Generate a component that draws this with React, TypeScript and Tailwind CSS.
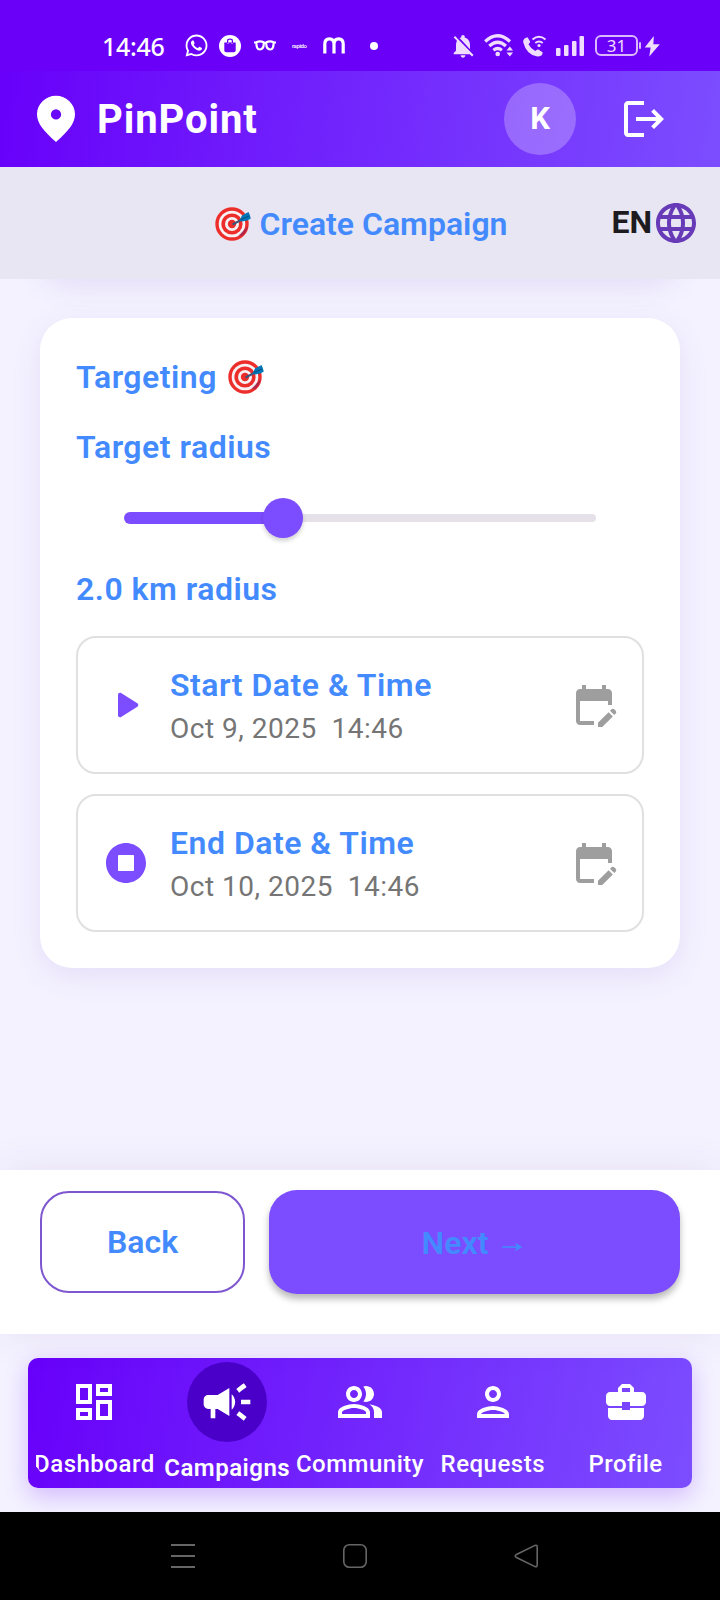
import type { ReactNode } from "react";
import { FaWhatsapp } from "react-icons/fa";
import { MdLanguage } from "react-icons/md";

function Icon({ d, className }: { d: string; className: string }) {
  return (
    <svg viewBox="0 0 24 24" fill="currentColor" className={className}>
      <path d={d} />
    </svg>
  );
}

const PATHS = {
  logout: "M17 7l-1.41 1.41L18.17 11H8v2h10.17l-2.58 2.58L17 17l5-5zM4 5h8V3H4c-1.1 0-2 .9-2 2v14c0 1.1.9 2 2 2h8v-2H4V5z",
  play: "M8 6.82v10.36c0 .79.87 1.27 1.54.84l8.14-5.18c.62-.39.62-1.29 0-1.69L9.54 5.98C8.87 5.55 8 6.03 8 6.82z",
  stop: "M12 2C6.48 2 2 6.48 2 12s4.48 10 10 10 10-4.48 10-10S17.52 2 12 2zm3.600 14H8.400a.4.4 0 0 1-.4-.4V8.400c0-.22.18-.4.4-.4h7.200c.22 0 .4.18.4.4v7.200a.4.4 0 0 1-.4.4z",
  calendar:
    "M12 22H5c-1.11 0-2-.9-2-2l.01-14c0-1.1.88-2 1.99-2h1V2h2v2h8V2h2v2h1c1.1 0 2 .9 2 2v6h-2v-2H5v10h7v2zm10.13-5.01.71-.71c.39-.39.39-1.02 0-1.41l-.71-.71c-.39-.39-1.02-.39-1.41 0l-.71.71 2.12 2.12zm-.71.71-5.300 5.300H14v-2.120l5.300-5.300 2.120 2.120z",
  dashboard: "M19 5v2h-4V5h4M9 5v6H5V5h4m10 8v6h-4v-6h4M9 17v2H5v-2h4M21 3h-8v6h8V3zM11 3H3v10h8V3zm10 8h-8v10h8V11zm-10 4H3v6h8v-6z",
  campaign:
    "M18 11v2h4v-2h-4zM16 17.610c.96.71 2.21 1.65 3.200 2.390.4-.53.8-1.070 1.200-1.600-.99-.74-2.240-1.680-3.200-2.400-.4.54-.8 1.080-1.200 1.610zM20.400 5.600C20 5.070 19.600 4.530 19.200 4c-.99.74-2.240 1.680-3.200 2.400.4.53.8 1.070 1.200 1.600.96-.72 2.210-1.650 3.200-2.400zM4 9c-1.100 0-2 .9-2 2v2c0 1.100.9 2 2 2h1v4h2v-4h1l5 3V6L8 9H4zm11.500 3c0-1.330-.58-2.530-1.500-3.350v6.690c.92-.81 1.500-2.010 1.500-3.340z",
  people:
    "M16.670 13.130C18.040 14.060 19 15.320 19 17v3h4v-3c0-2.180-3.570-3.470-6.330-3.870zM15 12c2.210 0 4-1.790 4-4s-1.790-4-4-4c-.47 0-.91.1-1.330.24C14.500 5.270 15 6.580 15 8s-.5 2.730-1.330 3.760c.42.14.86.24 1.330.24zM9 12c2.210 0 4-1.790 4-4s-1.790-4-4-4-4 1.790-4 4 1.790 4 4 4zm0-6c1.100 0 2 .9 2 2s-.9 2-2 2-2-.9-2-2 .9-2 2-2zM9 13c-2.670 0-8 1.340-8 4v3h16v-3c0-2.660-5.330-4-8-4zm6 5H3v-.99C3.200 16.290 6.300 15 9 15s5.800 1.290 6 2v1z",
  person:
    "M12 6c1.100 0 2 .9 2 2s-.9 2-2 2-2-.9-2-2 .9-2 2-2m0 10c2.700 0 5.800 1.290 6 2H6c.23-.72 3.310-2 6-2m0-12C9.790 4 8 5.790 8 8s1.790 4 4 4 4-1.790 4-4-1.790-4-4-4zm0 10c-2.670 0-8 1.340-8 4v2h16v-2c0-2.660-5.330-4-8-4z",
  briefcase:
    "M10 16v-1H3.010L3 19c0 1.110.89 2 2 2h14c1.110 0 2-.89 2-2v-4h-7v1h-4zm10-9h-4.010V5l-2-2h-4l-2 2v2H4c-1.100 0-2 .9-2 2v3c0 1.110.89 2 2 2h6v-2h4v2h6c1.100 0 2-.9 2-2V9c0-1.100-.9-2-2-2zm-6 0h-4V5h4v2z",
  bellOff:
    "M20 18.690L7.840 6.140 5.270 3.490 4 4.760l2.800 2.800v.010c-.52.99-.8 2.160-.8 3.420v5l-2 2v1h13.730l2 2L21 19.720l-1-1.030zM12 22c1.110 0 2-.89 2-2h-4c0 1.110.89 2 2 2zm6-7.320V11c0-3.080-1.640-5.640-4.500-6.320V4c0-.83-.67-1.500-1.500-1.500s-1.500.67-1.500 1.500v.68c-.15.03-.29.08-.42.12-.1.03-.2.070-.3.110h-.010c-.23.090-.46.200-.68.310L18 14.680z",
  bolt: "M14 1 4 13.500h6.500L9 23.500l11.500-13.500H13.500z",
};

function Target({ className }: { className: string }) {
  return (
    <svg viewBox="0 0 36 36" className={className}>
      <circle cx="17" cy="18" r="16.700" fill="#ec2d2a" />
      <circle cx="17" cy="18" r="13.300" fill="#f7f1f4" />
      <circle cx="17" cy="18" r="10.600" fill="#ec2d2a" />
      <circle cx="17" cy="18" r="7" fill="#f7f1f4" />
      <circle cx="17" cy="18" r="4.200" fill="#ec2d2a" />
      <path d="M23.500 29.500 33 20q-1.500 6.500-6 10z" fill="#8a1f5c" opacity=".6" />
      <path d="M17.500 18.500 27 13.500" stroke="#3f5478" strokeWidth="2" />
      <path d="M24.500 14.500 27 9.500 33.500 6l1.300 3 1 3.500-3.500 2-5.300 1z" fill="#0277b8" />
      <path d="m26 13.500 8-3.500" stroke="#07568c" strokeWidth="1.200" />
    </svg>
  );
}

function StatusBar() {
  return (
    <div className="flex h-[71px] shrink-0 items-center bg-[#6a00f8] pt-[20px] pl-[102px] text-white">
      <span className="w-[82px] font-['Noto_Sans',sans-serif] text-[25px] leading-[30px] font-medium tracking-[-0.3px]">14:46</span>
      <FaWhatsapp className="size-[25px]" />
      <svg viewBox="0 0 22 22" className="ml-[10px] size-[22px]">
        <circle cx="11" cy="11" r="11" fill="white" />
        <path d="M5.300 7.500h11.400v7.700q0 2-2 2H7.300q-2 0-2-2z" fill="#6a00f8" />
        <path d="M8.600 8V6q0-1.800 2.400-1.800T13.400 6v2" fill="none" stroke="#6a00f8" strokeWidth="1.200" />
        <path d="M9 8v.8M13 8v.8" fill="none" stroke="white" strokeWidth="1" />
      </svg>
      <svg viewBox="0 0 22 12" className="ml-[13px] h-[12px] w-[22px]" fill="none" stroke="white" strokeWidth="2.200">
        <path d="M2.400 2.300Q6 .6 9.600 2.300q.8 6.500-3.800 7.200Q2.200 9.600 2.400 2.300zM12.400 2.300Q16 .6 19.600 2.300q.2 7.300-3.400 7.200-4.600-.7-3.800-7.200zM9.500 3h3M0 2.500h2M20 2.500h2" />
      </svg>
      <span className="ml-[16px] w-[15px] text-[6px] leading-[8px] font-medium tracking-[-0.4px]">rapido</span>
      <svg viewBox="0 0 22 17" className="ml-[16px] h-[17px] w-[22px]" fill="none" stroke="white" strokeWidth="3.200">
        <path d="M1.800 16.500V7q0-5.200 4.600-5.200T11 7v9.500M11 7q0-5.200 4.600-5.200T20.200 7v9.500" />
      </svg>
      <span className="ml-[25px] size-[8px] rounded-full bg-white" />
      <div className="ml-[71px] flex items-center text-[#f0dcff]">
        <Icon d={PATHS.bellOff} className="size-[28px]" />
        <svg viewBox="0 0 30 23" className="ml-[7px] h-[23px] w-[30px]" fill="none" stroke="currentColor" strokeWidth="3.200">
          <path d="M1.200 7.500q12.300-11.500 24.800 0M5.300 12q8.400-7.500 16.600 0M9.400 16.200q4.300-3.400 8.500 0" />
          <circle cx="13.700" cy="20" r="2.300" fill="currentColor" stroke="none" />
          <path d="m22.500 16.500 3.300-4 3.300 4zM22.500 18.500l3.300 4 3.300-4z" fill="currentColor" stroke="none" />
        </svg>
        <svg viewBox="0 0 25 22" className="ml-[8px] h-[22px] w-[25px]">
          <path
            d="M5.500 2.200 8 6.200q.6 1.200-1.500 3.100 2.300 4.500 6.800 6.800 1.700-2 3-1.500l4.300 2.600q.2 4.300-5.300 4.300Q4.500 20 1.200 7.300.8 3.400 5.500 2.200z"
            fill="currentColor"
          />
          <path d="M10.500 4.500q6.500-5.500 13 0M13.300 8q3.700-3 7.400 0" fill="none" stroke="currentColor" strokeWidth="1.900" />
          <circle cx="17" cy="10.500" r="1.600" fill="currentColor" />
        </svg>
        <svg viewBox="0 0 28 20" className="ml-[9px] h-[20px] w-[28px]" fill="currentColor">
          <rect y="12" width="4.500" height="8" rx="1" />
          <rect x="8" y="9" width="4.500" height="11" rx="1" />
          <rect x="16" y="5" width="4.500" height="15" rx="1" />
          <rect x="23.500" width="4.500" height="20" rx="1" />
        </svg>
        <div className="ml-[11px] flex h-[21px] w-[43px] items-center justify-center rounded-[6px] border-2 border-[#dcb8fc] font-['Noto_Sans',sans-serif] text-[17px] leading-[17px]">
          31
        </div>
        <span className="ml-px h-[7px] w-[2px] rounded bg-[#d9b8fb]" />
        <Icon d={PATHS.bolt} className="size-[22px]" />
      </div>
    </div>
  );
}

function DateRow({ icon, title, value }: { icon: string; title: string; value: string }) {
  return (
    <div className="flex h-[138px] items-center rounded-[20px] border-2 border-[#e0e0e0] px-[24px]">
      <Icon d={icon} className="size-[48px] text-[#7c4dff]" />
      <div className="ml-[20px] flex-1 pt-[4px]">
        <div className="text-[32px] leading-[42px] font-semibold tracking-[0.5px] text-[#448aff]">{title}</div>
        <div className="pt-px text-[28px] leading-[44px] tracking-[0.5px] whitespace-pre text-[#757575]">{value}</div>
      </div>
      <Icon d={PATHS.calendar} className="size-[48px] text-[#9e9e9e]" />
    </div>
  );
}

function NavItem({ icon, label }: { icon: string; label: ReactNode }) {
  return (
    <div className="flex min-w-0 flex-1 flex-col items-center pt-[20px]">
      <Icon d={icon} className="size-[48px] shrink-0" />
      <span className="mt-[24px] text-[24px] leading-[28px] font-medium tracking-[0.5px] whitespace-nowrap">{label}</span>
    </div>
  );
}

export default function App() {
  return (
    <div className="flex h-[1600px] w-[720px] flex-col overflow-hidden bg-[#f4f2ff] font-['Roboto',sans-serif]">
      <StatusBar />

      <header className="flex h-[96px] shrink-0 items-center bg-[linear-gradient(98deg,#6800fa,#7c4dff)] pl-[26px] text-white">
        <svg viewBox="0 0 24 24" fill="currentColor" className="size-[60px]">
          <path d="M12 2.700C7.800 2.700 4.400 6 4.400 10.100c0 3.800 2.900 6.900 7.600 11.100 4.700-4.200 7.600-7.300 7.600-11.100 0-4.100-3.400-7.400-7.600-7.400zm0 9.500a2 2 0 1 1 0-4.100 2 2 0 0 1 0 4.100z" />
        </svg>
        <h1 className="ml-[11px] flex-1 pt-[2px] text-[40px] leading-[48px] font-bold tracking-[0.9px]">PinPoint</h1>
        <div className="flex size-[72px] items-center justify-center rounded-full bg-white/25 text-[31px] font-bold">K</div>
        <Icon d={PATHS.logout} className="mr-[52px] ml-[44px] size-[48px]" />
      </header>

      <div className="grid h-[112px] shrink-0 grid-cols-[1fr_auto_1fr] items-center bg-[#e8e6f2]">
        <div />
        <div className="flex items-center pt-[2px] pl-[2px] text-[#448aff]">
          <Target className="size-[36px]" />
          <h2 className="ml-[9px] text-[32px] leading-[40px] font-semibold">Create Campaign</h2>
        </div>
        <div className="flex items-center justify-end pr-[20px]">
          <span className="pb-[2px] text-[32px] leading-[40px] font-bold text-[#1d1b20]">EN</span>
          <MdLanguage className="size-[48px] text-[#673ab7]" />
        </div>
      </div>

      <main className="h-[891px] shrink-0 overflow-hidden px-[40px]">
        <div className="-mt-[61px] h-[60px] rounded-[32px] bg-white shadow-[0_8px_30px_rgba(103,58,183,0.11)]" />
        <section className="mt-[40px] flex h-[650px] flex-col rounded-[32px] bg-white px-[36px] pt-[39px] shadow-[0_8px_30px_rgba(103,58,183,0.10)]">
          <div className="flex items-center text-[#448aff]">
            <h3 className="text-[32px] leading-[40px] font-semibold tracking-[0.5px]">Targeting</h3>
            <Target className="ml-[11px] size-[36px]" />
          </div>
          <div className="mt-[30px] text-[32px] leading-[40px] font-semibold tracking-[0.5px] text-[#448aff]">Target radius</div>
          <div className="mx-[48px] mt-[31px] flex h-[40px] items-center">
            <div className="h-[12px] w-[149px] rounded-l-full bg-[#7c4dff]" />
            <div className="z-10 -ml-[10px] size-[40px] shrink-0 rounded-full bg-[#7c4dff] shadow-[0_3px_4px_rgba(0,0,0,0.18)]" />
            <div className="-ml-[2px] h-[8px] flex-1 rounded-r-full bg-[#e6e0e9]" />
          </div>
          <div className="mt-[31px] text-[32px] leading-[40px] font-semibold tracking-[0.5px] text-[#448aff]">2.0 km radius</div>
          <div className="mt-[27px] flex flex-col gap-[20px]">
            <DateRow icon={PATHS.play} title="Start Date & Time" value="Oct 9, 2025  14:46" />
            <DateRow icon={PATHS.stop} title="End Date & Time" value="Oct 10, 2025  14:46" />
          </div>
        </section>
      </main>

      <div className="z-10 flex h-[164px] shrink-0 items-start gap-[24px] bg-white px-[40px] pt-[20px] shadow-[0_0_40px_rgba(60,30,120,0.08)]">
        <button className="mt-px h-[102px] w-[205px] rounded-[29px] border-2 border-[#7e57d0] text-[32px] font-semibold text-[#448aff]">
          Back
        </button>
        <button className="flex h-[104px] flex-1 items-center justify-center rounded-[28px] bg-[#7c4dff] pt-px pr-[4px] text-[32px] font-semibold text-[#448aff] shadow-[0_5px_7px_rgba(0,0,0,0.28)]">
          Next
          <svg viewBox="0 0 21 10" className="mt-[9px] ml-[14px] h-[10px] w-[21px]">
            <path d="M0 4.200h15v1.600H0z" fill="currentColor" />
            <path d="M13 .8 20.500 5 13 9.200 14.500 5z" fill="currentColor" />
          </svg>
        </button>
      </div>

      <div className="h-[178px] shrink-0 px-[28px] pt-[24px]">
        <nav className="flex h-[130px] rounded-[10px] bg-[linear-gradient(101deg,#6800fa,#7c4dff)] text-white shadow-[0_8px_24px_rgba(106,0,248,0.24)]">
          <NavItem
            icon={PATHS.dashboard}
            label={
              <span className="[clip-path:polygon(2px_0,100%_0,100%_100%,11px_100%,2px_58%)]">Dashboard</span>
            }
          />
          <div className="flex min-w-0 flex-1 flex-col items-center pt-[4px]">
            <div className="flex size-[80px] shrink-0 items-center justify-center rounded-full bg-[#4a00c8]">
              <Icon d={PATHS.campaign} className="size-[56px]" />
            </div>
            <span className="mt-[12px] text-[24px] leading-[28px] font-semibold tracking-[0.5px]">Campaigns</span>
          </div>
          <NavItem icon={PATHS.people} label="Community" />
          <NavItem icon={PATHS.person} label="Requests" />
          <NavItem icon={PATHS.briefcase} label="Profile" />
        </nav>
      </div>

      <div className="z-20 flex h-[88px] shrink-0 items-center bg-black pl-[171px] text-[#666666]">
        <svg viewBox="0 0 24 24" className="size-[24px]" stroke="currentColor" strokeWidth="2">
          <path d="M0 1h24M0 12h24M0 23h24" />
        </svg>
        <svg viewBox="0 0 24 24" className="ml-[148px] size-[24px]" fill="none" stroke="currentColor" strokeWidth="1.600">
          <rect x=".8" y=".8" width="22.400" height="22.400" rx="5.500" />
        </svg>
        <svg viewBox="0 0 24 24" className="ml-[147px] size-[24px]" fill="none" stroke="currentColor" strokeWidth="1.600">
          <path d="M21 1.400 2 10.800q-1.600 1.200 0 2.400l19 9.400q2.200.7 2.200-1.600V3q0-2.300-2.200-1.600z" />
        </svg>
      </div>
    </div>
  );
}
